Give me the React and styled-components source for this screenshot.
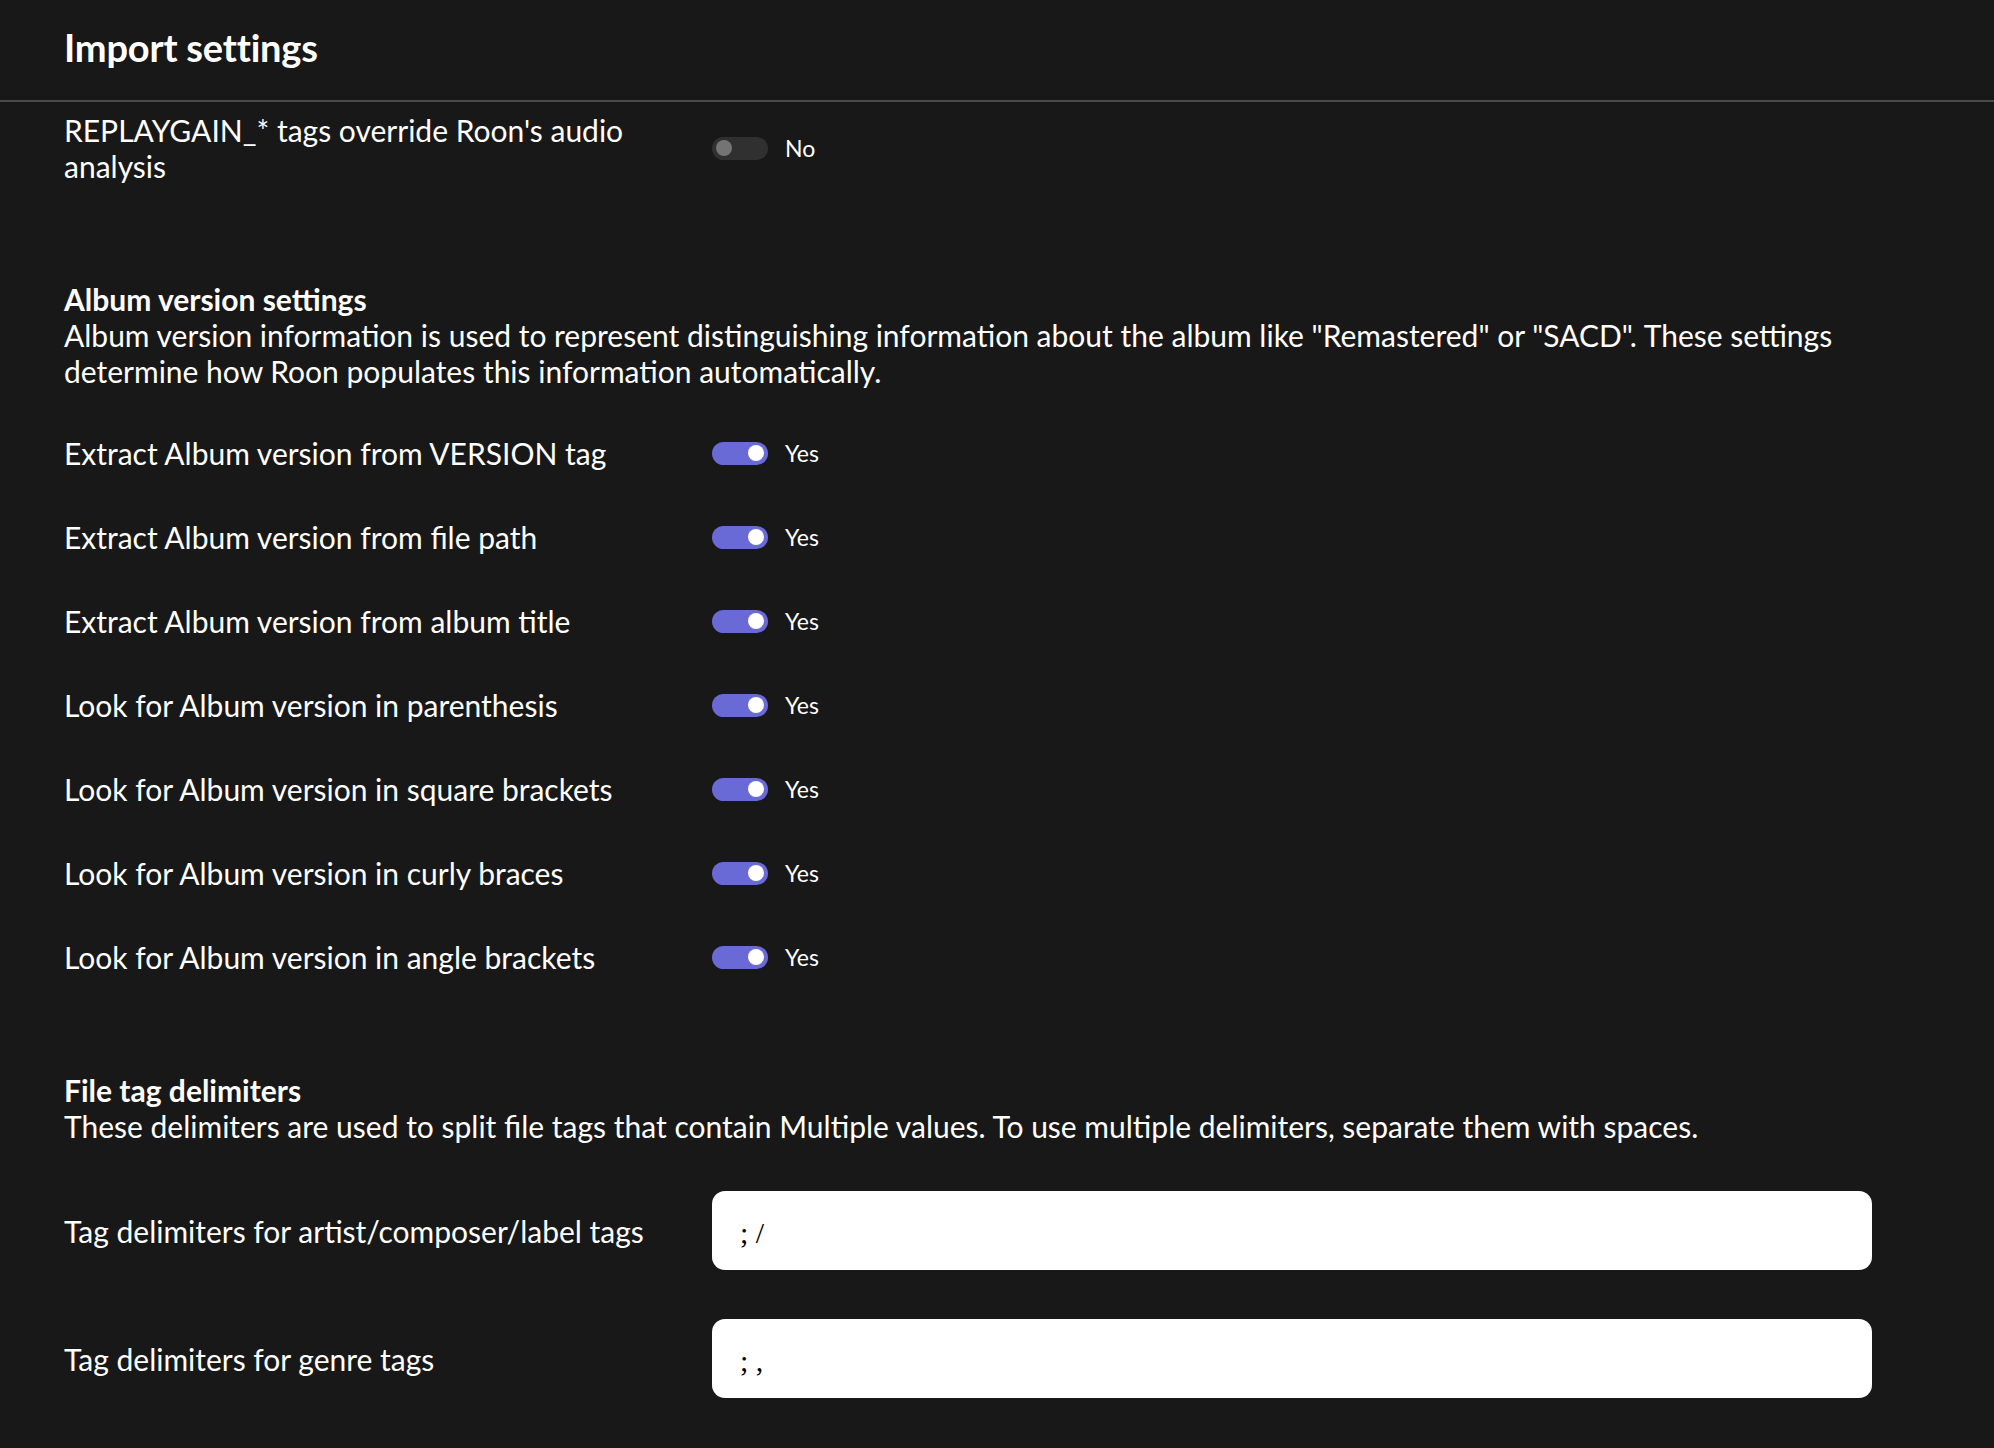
import React, { useState } from "react";
import styled, { createGlobalStyle } from "styled-components";

const GlobalStyle = createGlobalStyle`
  html, body {
    margin: 0;
    padding: 0;
    background: #181818;
  }
  body {
    font-family: Lato, "Noto Sans", sans-serif;
    color: #ffffff;
  }
`;

const Page = styled.div`
  min-height: 1448px;
  background: #181818;
`;

const Header = styled.div`
  display: flex;
  align-items: center;
  padding: 0 64px 6px;
  border-bottom: 2px solid #4b4b4b;
  box-sizing: border-box;
  height: 102px;
`;

const Title = styled.h1`
  margin: 0;
  font-size: 38px;
  font-weight: 700;
  letter-spacing: -0.2px;
`;

const Content = styled.div`
  padding: 0 64px;
`;

const Row = styled.div`
  display: grid;
  grid-template-columns: 648px 1fr;
  align-items: center;
  min-height: ${({ $h }) => $h || 84}px;
  margin-top: ${({ $mt }) => $mt || 0}px;
`;

const Label = styled.div`
  font-size: 30px;
  line-height: 36px;
  padding-right: 40px;
`;

const Section = styled.div`
  margin-top: ${({ $mt }) => $mt}px;
`;

const SectionTitle = styled.div`
  font-size: 30px;
  line-height: 36px;
  font-weight: 700;
`;

const SectionText = styled.div`
  font-size: 30px;
  line-height: 36px;
`;

const RowList = styled.div`
  margin-top: ${({ $mt }) => $mt}px;
`;

const ToggleWrap = styled.div`
  display: flex;
  align-items: center;
  gap: 17px;
  cursor: pointer;
`;

const Track = styled.div`
  width: 56px;
  height: 23px;
  border-radius: 12px;
  background: ${({ $on }) => ($on ? "#6a6ad6" : "#303030")};
  position: relative;
`;

const Knob = styled.div`
  position: absolute;
  top: 3.5px;
  left: ${({ $on }) => ($on ? "36px" : "4px")};
  width: 16px;
  height: 16px;
  border-radius: 50%;
  background: ${({ $on }) => ($on ? "#ffffff" : "#747474")};
`;

const ToggleText = styled.span`
  font-size: 23px;
  color: #ffffff;
`;

const Input = styled.input`
  width: 1160px;
  height: 79px;
  box-sizing: border-box;
  border: none;
  border-radius: 13px;
  background: #ffffff;
  padding: 4px 0 0 28px;
  font-family: "Liberation Serif", serif;
  font-size: 30px;
  color: #000;
  outline: none;
`;

const Toggle = ({ initial }) => {
  const [on, setOn] = useState(initial);
  return (
    <ToggleWrap onClick={() => setOn(!on)}>
      <Track $on={on}>
        <Knob $on={on} />
      </Track>
      <ToggleText>{on ? "Yes" : "No"}</ToggleText>
    </ToggleWrap>
  );
};

const versionRows = [
  "Extract Album version from VERSION tag",
  "Extract Album version from file path",
  "Extract Album version from album title",
  "Look for Album version in parenthesis",
  "Look for Album version in square brackets",
  "Look for Album version in curly braces",
  "Look for Album version in angle brackets",
];

export default function App() {
  return (
    <Page>
      <GlobalStyle />
      <Header>
        <Title>Import settings</Title>
      </Header>
      <Content>
        <Row $h={92}>
          <Label>REPLAYGAIN_* tags override Roon's audio analysis</Label>
          <Toggle initial={false} />
        </Row>

        <Section $mt={87}>
          <SectionTitle>Album version settings</SectionTitle>
          <SectionText>
            Album version information is used to represent distinguishing information about the album like "Remastered" or "SACD". These settings determine how Roon populates this information automatically.
          </SectionText>
        </Section>

        <RowList $mt={22}>
          {versionRows.map((r) => (
            <Row key={r}>
              <Label>{r}</Label>
              <Toggle initial={true} />
            </Row>
          ))}
        </RowList>

        <Section $mt={73}>
          <SectionTitle>File tag delimiters</SectionTitle>
          <SectionText>
            These delimiters are used to split file tags that contain Multiple values. To use multiple delimiters, separate them with spaces.
          </SectionText>
        </Section>

        <RowList $mt={47}>
          <Row $h={79}>
            <Label>Tag delimiters for artist/composer/label tags</Label>
            <Input defaultValue="; /" />
          </Row>
          <Row $h={79} $mt={49}>
            <Label>Tag delimiters for genre tags</Label>
            <Input defaultValue="; ," />
          </Row>
        </RowList>
      </Content>
    </Page>
  );
}
